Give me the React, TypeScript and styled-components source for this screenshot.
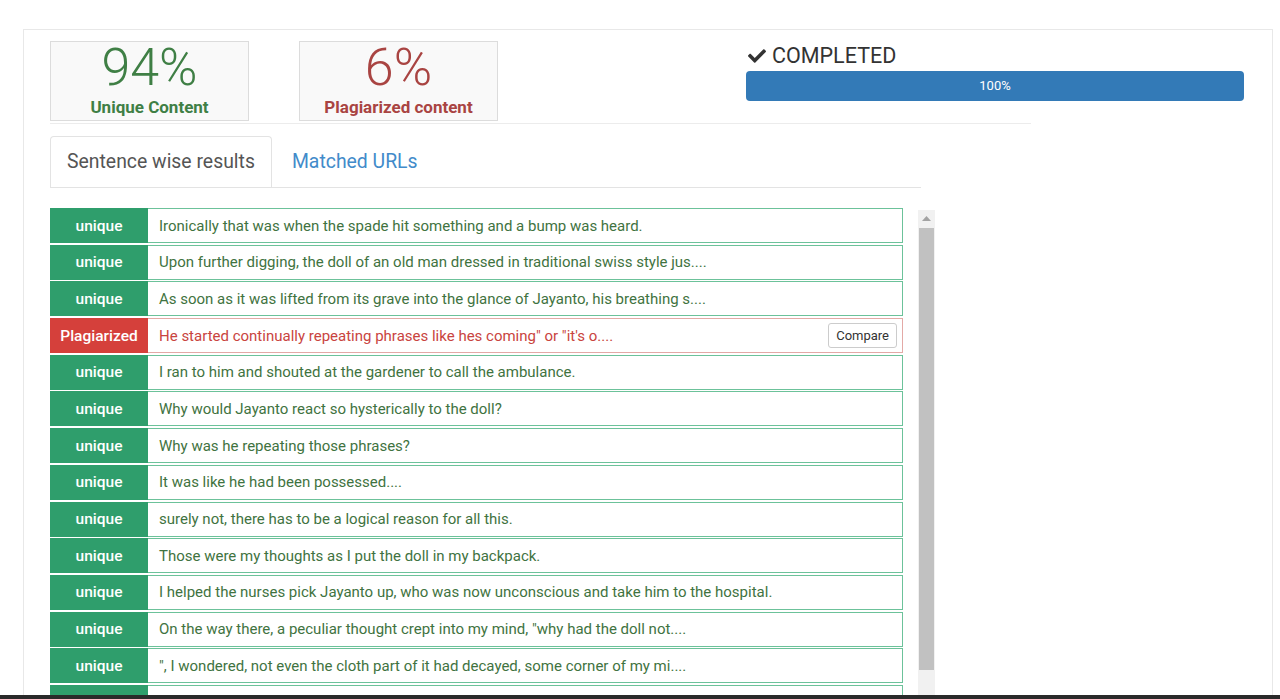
import styled, { createGlobalStyle } from 'styled-components';
import { FaCheck } from 'react-icons/fa';

const GlobalStyle = createGlobalStyle`
  html, body {
    margin: 0;
    padding: 0;
    background: #fff;
    font-family: Roboto, 'Liberation Sans', Arial, sans-serif;
    overflow: hidden;
  }
`;

const Page = styled.div`
  height: 699px;
  display: flex;
  flex-direction: column;
`;

const Panel = styled.div`
  flex: 1;
  min-height: 0;
  margin: 29px 7px 0 23px;
  border: 1px solid #e8e8e8;
  border-bottom: none;
  padding: 11px 0 0 26px;
  display: flex;
  flex-direction: column;
`;

const Header = styled.div`
  display: flex;
  align-items: flex-start;
`;

const Stats = styled.div`
  display: flex;
  gap: 50px;
`;

const StatBox = styled.div<{ $color: string }>`
  width: 197px;
  height: 78px;
  border: 1px solid #dcdcdc;
  background: #f9f9f9;
  color: ${(p) => p.$color};
  text-align: center;
`;

const StatValue = styled.div`
  font-size: 52px;
  font-weight: 300;
  line-height: 52px;
`;

const StatLabel = styled.div`
  font-size: 17px;
  font-weight: 700;
  line-height: 20px;
  margin-top: 3px;
`;

const Progress = styled.div`
  width: 498px;
  margin-left: 248px;
  padding-top: 2px;
`;

const Status = styled.div`
  display: flex;
  align-items: center;
  gap: 6px;
  font-size: 21.5px;
  line-height: 26px;
  color: #333;
  padding-left: 2px;
  svg {
    width: 18px;
    height: 18px;
  }
`;

const Bar = styled.div`
  margin-top: 2px;
  height: 30px;
  border-radius: 4px;
  background: #337ab7;
  color: #fff;
  font-size: 13px;
  line-height: 30px;
  text-align: center;
`;

const Rule = styled.div`
  width: 981px;
  height: 1px;
  background: #ececec;
  margin-top: 2px;
`;

const Tabs = styled.div`
  width: 871px;
  margin-top: 12px;
  display: flex;
  gap: 3px;
  border-bottom: 1px solid #e3e3e3;
`;

const Tab = styled.div<{ $active?: boolean }>`
  height: 50px;
  padding: 0 16px;
  font-size: 19.4px;
  line-height: 50px;
  color: ${(p) => (p.$active ? '#555' : '#428bca')};
  border: 1px solid ${(p) => (p.$active ? '#e3e3e3' : 'transparent')};
  border-bottom: none;
  border-radius: 4px 4px 0 0;
  background: #fff;
  margin-bottom: ${(p) => (p.$active ? '-1px' : '0')};
`;

const ListArea = styled.div`
  margin-top: 20px;
  flex: 1;
  min-height: 0;
  display: flex;
  gap: 15px;
  align-items: stretch;
`;

const Rows = styled.div`
  width: 853px;
  display: flex;
  flex-direction: column;
  gap: 1.7px;
  overflow: hidden;
`;

const ScrollTrack = styled.div`
  width: 17px;
  margin-top: 2px;
  background: #f1f1f1;
  display: flex;
  flex-direction: column;
  align-items: center;
`;

const ScrollArrow = styled.div`
  height: 17px;
  display: flex;
  align-items: center;
  justify-content: center;
  svg {
    width: 9px;
    height: 5px;
  }
`;

const ScrollThumb = styled.div`
  width: 15px;
  height: 442px;
  margin-top: 1px;
  background: #c1c1c1;
`;

const Row = styled.div<{ $bad?: boolean }>`
  height: 33px;
  flex-shrink: 0;
  display: flex;
  align-items: center;
  border: 1px solid ${(p) => (p.$bad ? '#e3a9a6' : '#6cc29a')};
  background: #fff;
`;

const Label = styled.div<{ $bad?: boolean }>`
  width: 98px;
  align-self: stretch;
  margin: -1px 0 -1px -1px;
  background: ${(p) => (p.$bad ? '#d5403b' : '#2f9e6c')};
  color: #fff;
  font-size: 15.5px;
  font-weight: 500;
  display: flex;
  align-items: center;
  justify-content: center;
`;

const Text = styled.div<{ $bad?: boolean }>`
  flex: 1;
  padding-left: 11px;
  font-size: 15px;
  color: ${(p) => (p.$bad ? '#c94440' : '#3f7341')};
  white-space: nowrap;
  overflow: hidden;
`;

const CompareButton = styled.button`
  margin-right: 5px;
  height: 25px;
  padding: 0 7px;
  font-family: inherit;
  font-size: 13px;
  color: #333;
  background: #fff;
  border: 1px solid #ccc;
  border-radius: 3px;
`;

const BottomBar = styled.div`
  height: 4px;
  background: #2a2a2a;
`;

const sentences: { text: string; bad?: boolean }[] = [
  { text: 'Ironically that was when the spade hit something and a bump was heard.' },
  { text: 'Upon further digging, the doll of an old man dressed in traditional swiss style jus....' },
  { text: 'As soon as it was lifted from its grave into the glance of Jayanto, his breathing s....' },
  { text: 'He started continually repeating phrases like hes coming" or "it\'s o....', bad: true },
  { text: 'I ran to him and shouted at the gardener to call the ambulance.' },
  { text: 'Why would Jayanto react so hysterically to the doll?' },
  { text: 'Why was he repeating those phrases?' },
  { text: 'It was like he had been possessed....' },
  { text: 'surely not, there has to be a logical reason for all this.' },
  { text: 'Those were my thoughts as I put the doll in my backpack.' },
  { text: 'I helped the nurses pick Jayanto up, who was now unconscious and take him to the hospital.' },
  { text: 'On the way there, a peculiar thought crept into my mind, "why had the doll not....' },
  { text: '", I wondered, not even the cloth part of it had decayed, some corner of my mi....' },
  { text: 'We reached the hospital and he was taken straight into the emergency ward....' },
];

export default function App() {
  return (
    <Page>
      <GlobalStyle />
      <Panel>
        <Header>
          <Stats>
            <StatBox $color="#3f7f45">
              <StatValue>94%</StatValue>
              <StatLabel>Unique Content</StatLabel>
            </StatBox>
            <StatBox $color="#a94442">
              <StatValue>6%</StatValue>
              <StatLabel>Plagiarized content</StatLabel>
            </StatBox>
          </Stats>
          <Progress>
            <Status>
              <FaCheck />
              COMPLETED
            </Status>
            <Bar>100%</Bar>
          </Progress>
        </Header>
        <Rule />
        <Tabs>
          <Tab $active>Sentence wise results</Tab>
          <Tab>Matched URLs</Tab>
        </Tabs>
        <ListArea>
          <Rows>
            {sentences.map((s, i) => (
              <Row key={i} $bad={s.bad}>
                <Label $bad={s.bad}>{s.bad ? 'Plagiarized' : 'unique'}</Label>
                <Text $bad={s.bad}>{s.text}</Text>
                {s.bad && <CompareButton>Compare</CompareButton>}
              </Row>
            ))}
          </Rows>
          <ScrollTrack>
            <ScrollArrow>
              <svg viewBox="0 0 9 5">
                <polygon points="0,5 4.5,0 9,5" fill="#a3a3a3" />
              </svg>
            </ScrollArrow>
            <ScrollThumb />
          </ScrollTrack>
        </ListArea>
      </Panel>
      <BottomBar />
    </Page>
  );
}
